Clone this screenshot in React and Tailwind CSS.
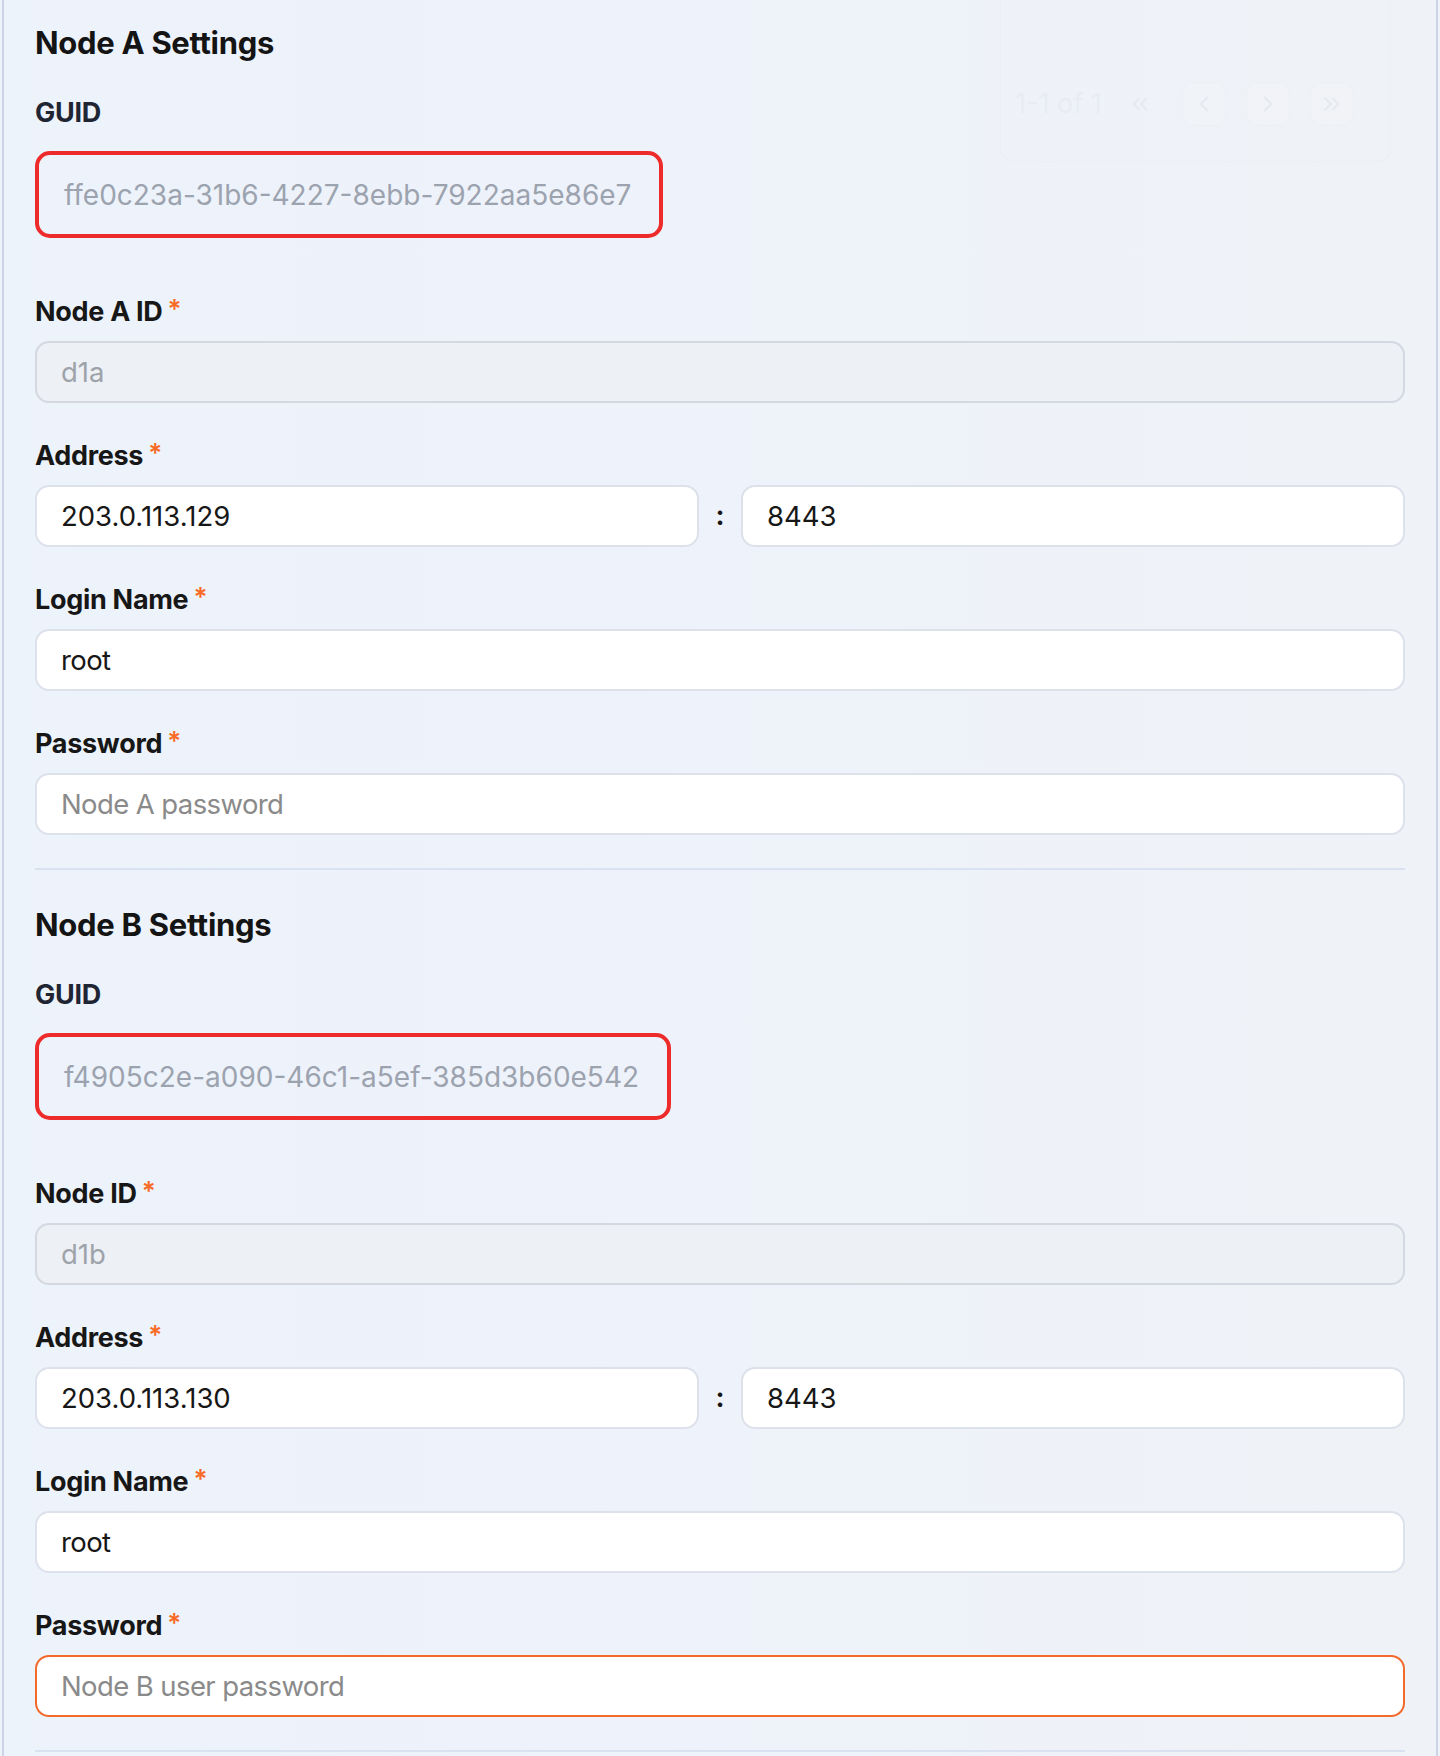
import React from 'react';
import { ChevronsLeft, ChevronLeft, ChevronRight, ChevronsRight } from 'lucide-react';

const nodes = [
  {
    title: 'Node A Settings',
    guid: 'ffe0c23a-31b6-4227-8ebb-7922aa5e86e7',
    idLabel: 'Node A ID',
    id: 'd1a',
    host: '203.0.113.129',
    port: '8443',
    login: 'root',
    passwordHint: 'Node A password',
    focused: false,
  },
  {
    title: 'Node B Settings',
    guid: 'f4905c2e-a090-46c1-a5ef-385d3b60e542',
    idLabel: 'Node ID',
    id: 'd1b',
    host: '203.0.113.130',
    port: '8443',
    login: 'root',
    passwordHint: 'Node B user password',
    focused: true,
  },
];

const Label = ({ children, required }) => (
  <div className="flex items-start h-[36px] text-[27px] leading-[36px] font-bold text-[#171717] tracking-[-0.3px]">
    <span>{children}</span>
    {required && <span className="ml-[5px] text-[26px] leading-[30px] font-semibold text-[#f76b27]">*</span>}
  </div>
);

const inputBase =
  'h-[62px] w-full rounded-[14px] border-2 px-[24px] text-[27.5px] outline-none placeholder:text-[#8a8a8a]';

const TextInput = ({ value, placeholder, disabled, focused, tight }) => (
  <input
    readOnly
    value={value}
    placeholder={placeholder}
    className={
      inputBase +
      (tight ? ' tracking-[-0.6px]' : '') +
      (disabled
        ? ' bg-[#edf0f5] border-[#d3d8e1] text-[#9ea3aa]'
        : focused
        ? ' bg-white border-[#f26a2c] text-[#171717]'
        : ' bg-white border-[#dde1ea] text-[#171717]')
    }
  />
);

const Field = ({ label, required, children }) => (
  <div className="flex flex-col gap-[11px]">
    <Label required={required}>{label}</Label>
    {children}
  </div>
);

const NodeSection = ({ node }) => (
  <section className="flex flex-col">
    <h2 className="h-[40px] text-[31px] leading-[40px] font-bold text-[#141414] tracking-[-0.3px]">{node.title}</h2>

    <div className="mt-[32px] h-[36px] text-[27px] leading-[36px] font-bold text-[#1f2533] tracking-[-0.3px]">GUID</div>
    <div className="mt-[20px] self-start flex items-center h-[87px] rounded-[15px] border-[4px] border-[#ee2b2b] pl-[25px] pr-[28px] text-[28px] text-[#9ca3af]">
      {node.guid}
    </div>

    <div className="mt-[56px] flex flex-col gap-[35px]">
      <Field label={node.idLabel} required>
        <TextInput value={node.id} disabled />
      </Field>

      <Field label="Address" required>
        <div className="flex items-center gap-[16px]">
          <TextInput value={node.host} />
          <span className="w-[10px] shrink-0 text-center text-[27px] font-bold text-[#171717]">:</span>
          <TextInput value={node.port} />
        </div>
      </Field>

      <Field label="Login Name" required>
        <TextInput value={node.login} tight />
      </Field>

      <Field label="Password" required>
        <TextInput value="" placeholder={node.passwordHint} focused={node.focused} tight />
      </Field>
    </div>

    <div className="mt-[33px] h-[2px] bg-[#d9e2f1]" />
  </section>
);

// faded pager that peeks through at the top right
const GhostPager = () => (
  <div className="pointer-events-none absolute top-0 right-[45px] flex items-end h-[162px] w-[391px] pl-[14px] pr-[36px] pb-[35px] rounded-b-[14px] border border-t-0 border-[#e6eaf0]/60 opacity-50">
    <span className="h-[44px] leading-[44px] text-[27px] text-[#e4e8ee]">1-1 of 1</span>
    <div className="ml-auto flex items-center gap-[20px]">
      <div className="flex items-center justify-center w-[44px] h-[44px] rounded-full text-[#dfe3ea]">
        <ChevronsLeft size={26} strokeWidth={2} />
      </div>
      <div className="flex items-center justify-center w-[44px] h-[44px] rounded-[12px] bg-[#f3f5f8] border border-[#eceff4] text-[#dfe3ea]">
        <ChevronLeft size={26} strokeWidth={2} />
      </div>
      <div className="flex items-center justify-center w-[44px] h-[44px] rounded-[12px] bg-[#f3f5f8] border border-[#eceff4] text-[#dde1e8]">
        <ChevronRight size={26} strokeWidth={2} />
      </div>
      <div className="flex items-center justify-center w-[44px] h-[44px] rounded-[12px] bg-[#f3f5f8] border border-[#eceff4] text-[#dde1e8]">
        <ChevronsRight size={26} strokeWidth={2} />
      </div>
    </div>
  </div>
);

export default function App() {
  return (
    <div
      className="min-h-screen bg-gradient-to-r from-[#edf3fb] via-[#eef2fa] to-[#eff2f6] px-[2px]"
      style={{ fontFamily: 'Inter, "Noto Sans", sans-serif' }}
    >
      <div className="relative min-h-screen border-x-2 border-[#ccd5e8] px-[31px] pt-[23px] pb-[40px]">
        <GhostPager />
        <div className="relative flex flex-col gap-[35px]">
          {nodes.map((n) => (
            <NodeSection key={n.title} node={n} />
          ))}
        </div>
      </div>
    </div>
  );
}
